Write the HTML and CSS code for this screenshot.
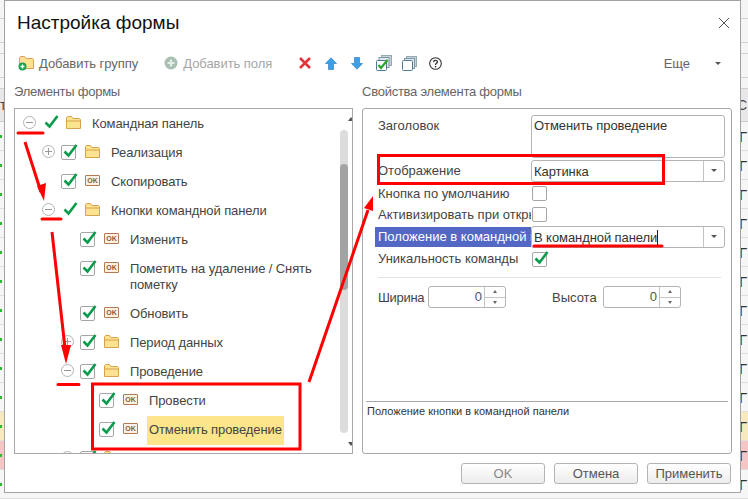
FILE: index.html
```html
<!DOCTYPE html>
<html lang="ru">
<head>
<meta charset="utf-8">
<title>Настройка формы</title>
<link rel="stylesheet" href="styles.css">
</head>
<body>
<svg width="0" height="0" class="defs">
  <symbol id="check" viewBox="0 0 15 15"><path d="M1.5 8.5 5.500 12.500 13.500 2" fill="none" stroke="#0a9b4c" stroke-width="2.6"/></symbol>
  <symbol id="folder" viewBox="0 0 15 13"><path d="M.5 12.500V1.500L1.500.5H5.500L7 2.500H13.500L14.500 3.500V12.500Z" fill="#fde28f" stroke="#d8a24e"/><path d="M1 5H14" stroke="#d8a24e"/></symbol>
</svg>

<div class="backdrop">
  <div class="bg-row h19"></div>
  <div class="bg-row h24"></div>
  <div class="bg-row h11"></div>
  <div class="bg-row h24"></div>
  <div class="bg-row h11"></div>
  <div class="bg-row head"><span>т</span><span>С</span></div>
  <div class="bg-row item"><i></i><span>Г</span></div>
  <div class="bg-row item"><i></i><span>Г</span></div>
  <div class="bg-row item"><i></i><span>Г</span></div>
  <div class="bg-row item"><i></i><span>Г</span></div>
  <div class="bg-row item"><i></i><span>Г</span></div>
  <div class="bg-row item"><i></i><span>Г</span></div>
  <div class="bg-row item"><i></i><span>Г</span></div>
  <div class="bg-row item"><i></i><span>Г</span></div>
  <div class="bg-row item"><i></i><span>Г</span></div>
  <div class="bg-row item"><i></i><span>Г</span></div>
  <div class="bg-row item yellow"><i></i><span>Г</span></div>
  <div class="bg-row item pink"><i></i><span>Г</span></div>
  <div class="bg-row item"><i></i><span>Г</span></div>
</div>

<div class="dialog">
  <header class="title-bar">
    <h1>Настройка формы</h1>
    <svg class="close" width="12" height="12" viewBox="0 0 12 12"><path d="M1 1 11 11M11 1 1 11" stroke="#555" stroke-width="1" fill="none"/></svg>
  </header>

  <div class="toolbar">
    <div class="tool add-group">
      <svg width="16" height="16" viewBox="0 0 16 16"><path d="M1.500 13.500V2.500L2.500 1.500H6.500L8 3.500H14.500L15.500 4.500V13.500Z" fill="#fde28f" stroke="#d8a24e"/><circle cx="4.500" cy="11.500" r="4" fill="#19a24f"/><path d="M2.500 11.500H6.500M4.500 9.500V13.500" stroke="#fff" stroke-width="1.4"/></svg>
      <span>Добавить группу</span>
    </div>
    <div class="tool add-field">
      <svg width="14" height="14" viewBox="0 0 14 14"><circle cx="7" cy="7" r="6.500" fill="#a9c0b2"/><path d="M3.500 7H10.500M7 3.500V10.500" stroke="#e6eee9" stroke-width="2"/></svg>
      <span>Добавить поля</span>
    </div>
    <svg class="ico x" width="12" height="12" viewBox="0 0 12 12"><path d="M1 1 11 11M11 1 1 11" stroke="#e8333b" stroke-width="2.6" fill="none"/></svg>
    <svg class="ico up" width="12" height="13" viewBox="0 0 12 13"><path d="M6 .8 11.500 6.500H8.500V12.500H3.500V6.500H.5Z" fill="#3f9fe6" stroke="#2f83c4" stroke-width=".7"/></svg>
    <svg class="ico down" width="12" height="13" viewBox="0 0 12 13"><path d="M6 12.200 11.500 6.500H8.500V.5H3.500V6.500H.5Z" fill="#3f9fe6" stroke="#2f83c4" stroke-width=".7"/></svg>
    <svg class="ico stack1" width="16" height="16" viewBox="0 0 16 16"><rect x="5.500" y=".5" width="10" height="10" fill="#c5d3d8" stroke="#93a9b3"/><rect x="3" y="2.500" width="10" height="10" fill="#dfe7ea" stroke="#7f9aa7"/><rect x=".5" y="5.500" width="10" height="10" rx="1" fill="#fff" stroke="#4f7a94"/><path d="M2.500 10 5 13 11.500 5" fill="none" stroke="#2aa52a" stroke-width="2.2"/></svg>
    <svg class="ico stack2" width="15" height="15" viewBox="0 0 15 15"><rect x="4.500" y=".5" width="10" height="10" fill="#c5d3d8" stroke="#93a9b3"/><rect x="2.500" y="2.500" width="10" height="10" fill="#dfe7ea" stroke="#7f9aa7"/><rect x=".5" y="4.500" width="10" height="10" rx="1" fill="#fff" stroke="#4f7a94"/></svg>
    <svg class="ico help" width="13" height="13" viewBox="0 0 13 13"><circle cx="6.500" cy="6.500" r="5.800" fill="#fff" stroke="#333" stroke-width="1.1"/><path d="M4.600 5.100C4.700 2.800 8.400 2.800 8.400 5 8.400 6.400 6.500 6.300 6.500 8" fill="none" stroke="#333" stroke-width="1.3"/><path d="M5.800 9H7.200V10.400H5.800Z" fill="#333"/></svg>
    <span class="more">Еще</span>
    <span class="more-arrow"></span>
  </div>

  <div class="columns">
    <section class="col">
      <div class="col-title">Элементы формы</div>
      <div class="panel tree">
        <div class="row l0"><span class="exp minus"></span><span class="box bare"><svg><use href="#check"/></svg></span><svg class="ic-folder"><use href="#folder"/></svg><span class="txt">Командная панель</span></div>
        <div class="row l1"><span class="exp plus"></span><span class="box"><svg><use href="#check"/></svg></span><svg class="ic-folder"><use href="#folder"/></svg><span class="txt">Реализация</span></div>
        <div class="row l1"><span class="exp"></span><span class="box"><svg><use href="#check"/></svg></span><span class="ok">OK</span><span class="txt">Скопировать</span></div>
        <div class="row l1"><span class="exp minus"></span><span class="box bare"><svg><use href="#check"/></svg></span><svg class="ic-folder"><use href="#folder"/></svg><span class="txt">Кнопки командной панели</span></div>
        <div class="row l2"><span class="exp"></span><span class="box"><svg><use href="#check"/></svg></span><span class="ok">OK</span><span class="txt">Изменить</span></div>
        <div class="row l2"><span class="exp"></span><span class="box"><svg><use href="#check"/></svg></span><span class="ok">OK</span><span class="txt">Пометить на удаление / Снять<br>пометку</span></div>
        <div class="row l2"><span class="exp"></span><span class="box"><svg><use href="#check"/></svg></span><span class="ok">OK</span><span class="txt">Обновить</span></div>
        <div class="row l2"><span class="exp plus"></span><span class="box"><svg><use href="#check"/></svg></span><svg class="ic-folder"><use href="#folder"/></svg><span class="txt">Период данных</span></div>
        <div class="row l2"><span class="exp minus"></span><span class="box"><svg><use href="#check"/></svg></span><svg class="ic-folder"><use href="#folder"/></svg><span class="txt">Проведение</span></div>
        <div class="row l3"><span class="exp"></span><span class="box"><svg><use href="#check"/></svg></span><span class="ok">OK</span><span class="txt">Провести</span></div>
        <div class="row l3 current"><span class="exp"></span><span class="box"><svg><use href="#check"/></svg></span><span class="ok">OK</span><span class="txt">Отменить проведение</span></div>
        <div class="row l2"><span class="exp minus"></span><span class="box"><svg><use href="#check"/></svg></span><svg class="ic-folder"><use href="#folder"/></svg><span class="txt">Настройки</span></div>
        <div class="scrollbar">
          <span class="arr up"></span>
          <div class="track"><div class="thumb"></div></div>
          <span class="arr down"></span>
        </div>
      </div>
    </section>

    <section class="col">
      <div class="col-title">Свойства элемента формы</div>
      <div class="panel props">
        <div class="props-body">
          <div class="prop p-title"><label>Заголовок</label><div class="field area">Отменить проведение</div></div>
          <div class="prop p-sel"><label>Отображение</label><div class="field select"><span>Картинка</span><b></b></div></div>
          <div class="prop p-chk"><label>Кнопка по умолчанию</label><span class="box plain"></span></div>
          <div class="prop p-chk"><label>Активизировать при открытии</label><span class="box plain"></span></div>
          <div class="prop p-sel"><label class="selected">Положение в командной панели</label><div class="field select"><span class="caret">В командной панели</span><b></b></div></div>
          <div class="prop p-chk"><label class="raise">Уникальность команды</label><span class="box plain"><svg><use href="#check"/></svg></span></div>
          <hr class="sep">
          <div class="sizes">
            <label>Ширина</label>
            <div class="spin w"><span>0</span><b></b></div>
            <label class="l-h">Высота</label>
            <div class="spin"><span>0</span><b></b></div>
          </div>
        </div>
        <div class="hint">Положение кнопки в командной панели</div>
      </div>
    </section>
  </div>

  <footer class="buttons">
    <button class="off">OK</button>
    <button>Отмена</button>
    <button>Применить</button>
  </footer>
</div>

<svg class="notes" width="748" height="499" viewBox="0 0 748 499">
  <g fill="none" stroke="#f00" stroke-width="3">
    <path d="M18 133H43M42 219H61M58 384.500H79M534 246H662" stroke-linecap="round"/>
    <path d="M25 142 41 192M52 232 65 348M309 382 368 210"/>
    <rect x="92.500" y="384" width="207.500" height="65"/>
    <rect x="378.500" y="155.500" width="285" height="28"/>
  </g>
  <path d="M37 186 46 183 44 201ZM61 345 71 345 66 364ZM364 208 373 196 373 211Z" fill="#f00"/>
</svg>
</body>
</html>
```
FILE: styles.css
```css
* { box-sizing: border-box; }
html, body { margin: 0; padding: 0; }
body {
  position: relative;
  width: 748px;
  height: 499px;
  overflow: hidden;
  background: #f4f2f2;
  font-family: "Liberation Sans", Arial, sans-serif;
  font-size: 13px;
  color: #333;
}
.defs { position: absolute; }

.backdrop { display: flex; flex-direction: column; height: 499px; background: #f5f5f5; }
.bg-row { display: flex; justify-content: space-between; align-items: center; flex: none; border-bottom: 1px solid #d0d0d0; padding-right: 1px; font-size: 14px; color: #444; }
.h19 { height: 19px; }
.h24 { height: 24px; }
.h11 { height: 11px; }
.head { height: 33px; background: #e9e7e7; border-color: #ccc; }
.item { height: 29px; background: #f7f6f6; border-color: #dfdfdf; }
.item i { width: 2px; height: 3px; background: #2eb82e; }
.item span { font-size: 15px; color: #333; }
.yellow { background: #f8eabf; }
.pink { background: #f6c6c6; }

.dialog {
  position: absolute;
  left: 4px;
  top: 0;
  width: 737px;
  height: 493px;
  background: #fff;
  border: 1px solid #a3a3a3;
  padding: 0 8px 0 9px;
  display: flex;
  flex-direction: column;
}
.title-bar { height: 45px; display: flex; align-items: center; justify-content: space-between; flex: none; padding: 0 3px 2px 3px; }
h1 { margin: 0; font-size: 19px; font-weight: 400; color: #111; }
.close { margin-right: -1px; }

.toolbar { height: 34px; display: flex; align-items: center; flex: none; padding: 0 0 0 4px; color: #666; letter-spacing: -.05px; }
.tool { display: flex; align-items: center; gap: 5px; }
.add-field { margin-left: 26px; color: #a6a6a6; gap: 5px; }
.ico { flex: none; }
.x { margin-left: 27px; }
.up { margin-left: 14px; }
.down { margin-left: 14px; }
.stack1 { margin-left: 13px; }
.stack2 { margin-left: 10px; }
.help { margin-left: 12px; }
.more { margin-left: auto; margin-right: 25px; }
.more-arrow { width: 0; height: 0; border: 3px solid transparent; border-top: 3px solid #555; border-bottom: 0; margin-right: 11px; }

.columns { display: grid; grid-template-columns: 339px 370px; gap: 9px; flex: none; }
.col-title { height: 28px; line-height: 24px; color: #666; letter-spacing: -.25px; }
.panel { position: relative; height: 346px; border: 1px solid #a8a8a8; overflow: hidden; }
.tree { padding-top: 1px; }

.row { display: flex; align-items: flex-start; padding: 6px 0 7px; line-height: 16px; }
.l0 { padding-left: 8px; }
.l1 { padding-left: 27px; }
.l2 { padding-left: 46px; }
.l3 { padding-left: 65px; }
.exp { position: relative; width: 13px; height: 13px; margin: 0 6px 0 0; flex: none; border-radius: 50%; }
.exp.minus, .exp.plus { border: 1px solid #b4b4b4; }
.exp.minus::before, .exp.plus::before { content: ""; position: absolute; left: 2px; right: 2px; top: 5px; height: 1px; background: #999; }
.exp.plus::after { content: ""; position: absolute; top: 2px; bottom: 2px; left: 5px; width: 1px; background: #999; }
.box { position: relative; width: 15px; height: 15px; margin: 0 9px 0 0; flex: none; border: 1px solid #a6a6a6; border-radius: 2px; background: #fff; }
.box.bare { border-color: transparent; }
.box svg { position: absolute; left: 1px; top: -3px; width: 15px; height: 15px; overflow: visible; }
.box.plain { margin: 0; }
.ic-folder { width: 15px; height: 13px; margin: 0 11px 0 0; flex: none; }
.ok { width: 15px; height: 11px; margin: 1px 11px 0 0; flex: none; border: 1px solid #b07a54; border-radius: 1px; background: #fdf1e2; color: #8a5a35; font-size: 7px; font-weight: 700; line-height: 9px; text-align: center; }
.txt { color: #444; letter-spacing: -.1px; }
.current .txt { background: #fde58c; margin: -6px 0 -7px -2px; padding: 6px 2px 7px; }

.scrollbar { position: absolute; right: 0; top: 0; bottom: 0; width: 16px; display: flex; flex-direction: column; align-items: center; background: #fff; }
.arr { width: 0; height: 0; border: 3px solid transparent; flex: none; }
.arr.up { border-bottom: 4px solid #555; border-top: 0; margin-top: 8px; }
.arr.down { border-top: 4px solid #555; border-bottom: 0; margin-bottom: 7px; }
.track { position: relative; flex: 1; width: 8px; margin: 9px 0 9px; background: #dcdcdc; border-radius: 4px; }
.thumb { position: absolute; left: 0; right: 0; top: 34px; height: 126px; background: #a3a3a3; border-radius: 4px; }

.props { display: flex; flex-direction: column; border-radius: 3px; }
.props-body { flex: 1; padding: 6px 5px 0 15px; }
.prop { display: flex; align-items: center; width: 348px; }
.prop label { width: 153px; flex: none; white-space: nowrap; overflow: hidden; }
.p-title { align-items: flex-start; margin-bottom: 2px; }
.p-title label { padding-top: 3px; }
.p-sel { margin-bottom: 4px; }
.p-sel label:not(.selected) { padding-bottom: 2px; }
.p-chk { height: 15px; margin-bottom: 6px; }
.p-chk .box { margin-left: 1px; }
.p-chk + .p-sel { margin-top: -2px; }
label { color: #444; }
label.raise { padding-bottom: 2px; }
label.selected { background: #5268c4; color: #fff; height: 20px; line-height: 20px; margin-left: -3px; padding-left: 3px; width: 156px; }
.field { width: 194px; border: 1px solid #b4b4b4; border-radius: 3px; color: #333; letter-spacing: -.08px; }
.area { height: 43px; padding: 2px 2px; }
.select { height: 22px; display: flex; align-items: center; justify-content: space-between; padding-left: 2px; }
.select b { position: relative; width: 21px; height: 20px; border-left: 1px solid #c4c4c4; }
.select b::after { content: ""; position: absolute; left: 7px; top: 8px; border: 3px solid transparent; border-top: 3px solid #555; border-bottom: 0; }
.caret { border-right: 1px solid #222; padding-right: 0; }
.sep { margin: 10px 5px 7px 0; border: 0; border-top: 1px solid #e2e2e2; }
.sizes { display: flex; align-items: center; padding-top: 1px; height: 22px; }
.sizes label { width: 50px; flex: none; letter-spacing: -.3px; padding-top: 1px; }
.l-h { margin-left: 46px; width: 51px !important; letter-spacing: 0 !important; }
.spin { position: relative; width: 78px; height: 22px; border: 1px solid #b4b4b4; border-radius: 3px; padding-right: 23px; text-align: right; line-height: 20px; color: #555; }
.spin b { position: absolute; right: 0; top: 0; bottom: 0; width: 21px; border-left: 1px solid #c4c4c4; background: linear-gradient(#c4c4c4, #c4c4c4) 0 10px / 100% 1px no-repeat; }
.spin b::before, .spin b::after { content: ""; position: absolute; left: 8px; border: 2px solid transparent; }
.spin b::before { top: 3px; border-bottom: 3px solid #666; border-top: 0; }
.spin b::after { bottom: 3px; border-top: 3px solid #666; border-bottom: 0; }
.hint { height: 52px; margin: 0 3px; border-top: 1px solid #a8a8a8; padding: 2px 0 0 1px; font-size: 11px; line-height: 15px; color: #333; }

.buttons { display: flex; justify-content: flex-end; gap: 9px; padding-top: 9px; padding-right: 1px; }
button { width: 84px; height: 21px; padding: 0; border: 1px solid #b4b4b4; border-radius: 3px; background: linear-gradient(#fff, #ececec); font: 13px "Liberation Sans", Arial, sans-serif; color: #555; }
button.off { color: #888; }

.notes { position: absolute; left: 0; top: 0; pointer-events: none; }
```
